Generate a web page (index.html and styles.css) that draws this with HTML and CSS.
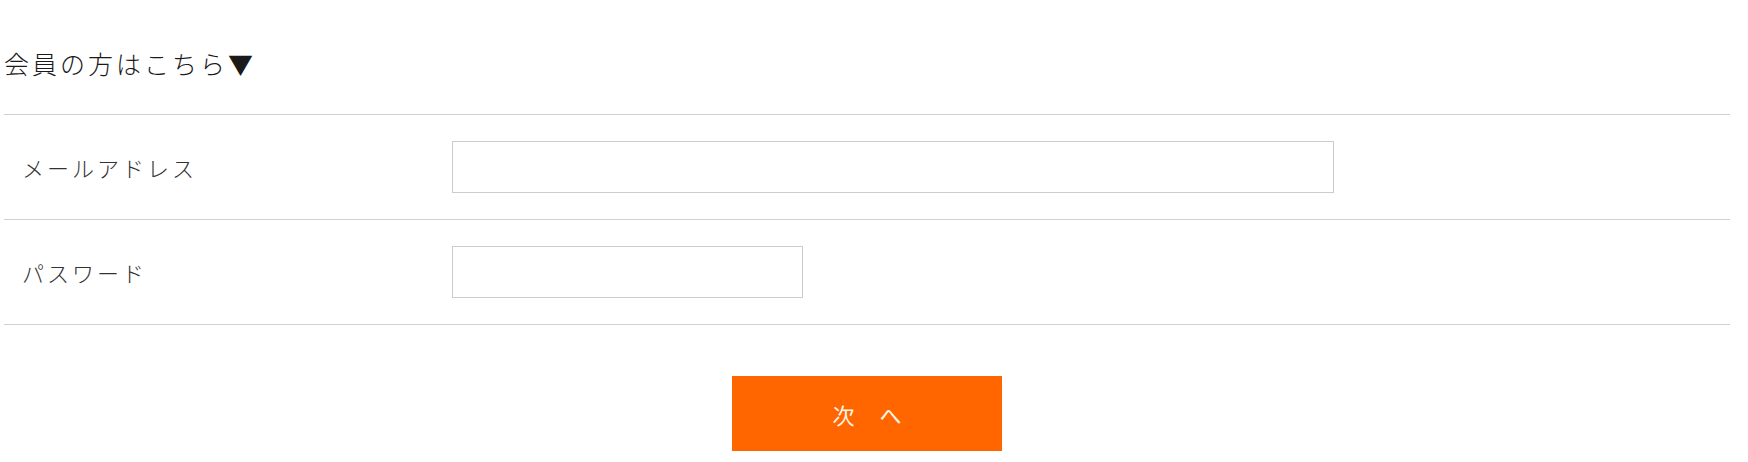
FILE: index.html
```html
<!DOCTYPE html>
<html lang="ja">
<head>
<meta charset="utf-8">
<title>会員ログイン</title>
<link rel="stylesheet" href="styles.css">
</head>
<body>
<div class="page">
  <h2 class="title">会員の方はこちら▼</h2>
  <div class="form">
    <div class="row">
      <div class="label">メールアドレス</div>
      <div class="field"><input class="input input-email" type="text"></div>
    </div>
    <div class="row">
      <div class="label">パスワード</div>
      <div class="field"><input class="input input-pass" type="password"></div>
    </div>
  </div>
  <div class="actions">
    <button class="btn" type="button">次 へ</button>
  </div>
</div>
</body>
</html>
```

FILE: styles.css
```css
html, body {
  margin: 0;
  padding: 0;
  background: #ffffff;
}

body {
  font-family: "Noto Sans CJK JP", "Noto Sans", sans-serif;
  color: #222222;
}

.page {
  padding: 45px 18px 0 4px;
}

.title {
  margin: 0 0 33px 0;
  font-size: 25px;
  line-height: 36px;
  font-weight: 300;
  letter-spacing: 3px;
  color: #1a1a1a;
}

.form {
  border-top: 1px solid #d0d0d0;
}

.row {
  display: flex;
  align-items: center;
  height: 104px;
  border-bottom: 1px solid #d0d0d0;
}

.label {
  width: 448px;
  flex: none;
  box-sizing: border-box;
  padding-left: 18px;
  font-size: 22px;
  letter-spacing: 3px;
  font-weight: 300;
  color: #333333;
}

.field {
  flex: 1;
  display: flex;
  align-items: center;
}

.input {
  box-sizing: border-box;
  height: 52px;
  border: 1px solid #cccccc;
  border-radius: 0;
  background: #ffffff;
  margin: 0;
  padding: 0 10px;
  font-size: 18px;
  outline: none;
}

.input-email {
  width: 882px;
}

.input-pass {
  width: 351px;
}

.actions {
  display: flex;
  justify-content: center;
  padding-top: 51px;
}

.btn {
  width: 270px;
  height: 75px;
  border: none;
  border-radius: 0;
  background: #ff6600;
  color: #fff6ea;
  font-family: "Noto Sans CJK JP", "Noto Sans", sans-serif;
  font-size: 22px;
  font-weight: 400;
  word-spacing: 20px;
  padding: 0;
  cursor: pointer;
}
```
